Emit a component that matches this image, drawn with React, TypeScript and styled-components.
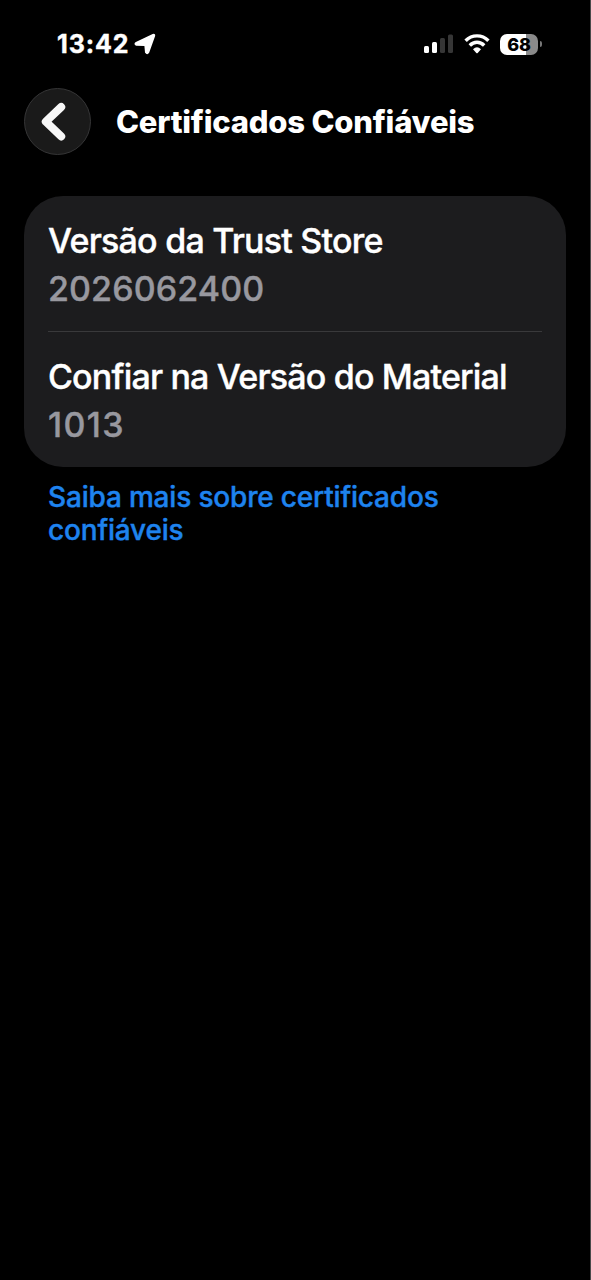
import React from "react";
import styled, { createGlobalStyle } from "styled-components";

const GlobalStyle = createGlobalStyle`
  * { box-sizing: border-box; }
  body {
    margin: 0;
    background: #000;
    font-family: Inter, "Liberation Sans", sans-serif;
    color: #fff;
  }
`;

const Screen = styled.main`
  width: 100%;
  height: 1280px;
  background: #000;
  border-right: 1px solid #4a4a4a;
  overflow: hidden;
`;

const StatusBar = styled.header`
  display: flex;
  align-items: center;
  justify-content: space-between;
  height: 88px;
  padding: 0 48px 0 57px;
`;

const StatusGroup = styled.div<{ $gap: number }>`
  display: flex;
  align-items: center;
  gap: ${({ $gap }) => $gap}px;
`;

const Time = styled.span`
  font-size: 25px;
  font-weight: 700;
  line-height: 30px;
  letter-spacing: 0.9px;
  -webkit-text-stroke: 0.4px currentColor;
`;

const Battery = styled.div`
  display: flex;
  align-items: center;
  gap: 2px;
`;

const BatteryBody = styled.div`
  width: 38px;
  height: 21px;
  border-radius: 7px;
  background: linear-gradient(90deg, #fff 68%, #8a8a8a 68%);
  color: #000;
  font-size: 18px;
  font-weight: 800;
  line-height: 21px;
  letter-spacing: -0.3px;
  text-align: center;
`;

const BatteryCap = styled.div`
  width: 2px;
  height: 6px;
  border-radius: 0 2px 2px 0;
  background: #777;
`;

const NavBar = styled.nav`
  display: flex;
  align-items: center;
  gap: 25px;
  height: 67px;
  padding-left: 24px;
`;

const BackButton = styled.button`
  display: flex;
  width: 67px;
  height: 67px;
  padding: 0;
  border: 1px solid #353536;
  border-radius: 50%;
  background: #1a1a1a;
`;

const Title = styled.h1`
  margin: 0;
  font-size: 31px;
  font-weight: 800;
  line-height: 38px;
  letter-spacing: -0.22px;
  white-space: nowrap;
`;

const Card = styled.section`
  margin: 41px 24px 0;
  padding: 0 24px;
  border-radius: 39px;
  background: #1c1c1e;
`;

const Row = styled.div<{ $divided?: boolean }>`
  height: ${({ $divided }) => ($divided ? 136 : 135)}px;
  padding-top: 21px;
  border-bottom: ${({ $divided }) => ($divided ? "1px solid #39393b" : "none")};
`;

const Label = styled.div<{ $spacing: number }>`
  height: 48px;
  font-size: 34px;
  font-weight: 500;
  line-height: 48px;
  letter-spacing: ${({ $spacing }) => $spacing}px;
  -webkit-text-stroke: 0.4px currentColor;
  white-space: nowrap;
`;

const Value = styled(Label)`
  color: #98989f;
`;

const LearnMore = styled.a`
  display: block;
  width: 430px;
  margin: 14px 0 0 48px;
  color: #1e83ee;
  font-size: 28px;
  font-weight: 500;
  line-height: 33px;
  letter-spacing: -0.18px;
  -webkit-text-stroke: 0.4px currentColor;
`;

const LocationIcon = () => (
  <svg width="22" height="22" viewBox="0 0 22 22">
    <path
      d="M2.2 9.6 19 1.7Q20.9 1.1 20.3 3L14.4 19.4Q13.2 21.4 11.8 19.4L11.2 13Q11.1 12.3 10.3 12.3L2.5 12Q.2 11 2.2 9.6Z"
      fill="#fff" stroke="#fff" strokeWidth="1.6" strokeLinejoin="round"
    />
  </svg>
);

const SignalIcon = () => (
  <svg width="30" height="20" viewBox="0 0 30 20">
    <rect x="0" y="12" width="5" height="7" rx="1.5" fill="#fff" />
    <rect x="8" y="8" width="5" height="11" rx="1.5" fill="#fff" />
    <rect x="16" y="4" width="5" height="15" rx="1.5" fill="#363636" />
    <rect x="24" y="0.5" width="5" height="18.5" rx="1.5" fill="#363636" />
  </svg>
);

const WifiIcon = () => (
  <svg width="26" height="20" viewBox="0 0 26 20">
    <g fill="none" stroke="#fff" strokeWidth="3.4">
      <path d="M1.6 6.8C8 .2 18 .2 24.4 6.8" />
      <path d="M5.8 11.5C10 7.2 16 7.2 20.2 11.5" />
    </g>
    <path d="M9 15.2Q13 11.4 17 15.2L13.7 18.9Q13 19.6 12.3 18.9Z" fill="#fff" />
  </svg>
);

const ChevronIcon = () => (
  <svg width="65" height="65" viewBox="0 0 65 65">
    <path d="M36.2 18 20.8 32.7 36.2 47.4" fill="none" stroke="#f7f7f7" strokeWidth="8" strokeLinecap="round" strokeLinejoin="round" />
  </svg>
);

export default function App() {
  return (
    <>
      <GlobalStyle />
      <Screen>
        <StatusBar>
          <StatusGroup $gap={5}>
            <Time>13:42</Time>
            <LocationIcon />
          </StatusGroup>
          <StatusGroup $gap={10}>
            <SignalIcon />
            <WifiIcon />
            <Battery>
              <BatteryBody>68</BatteryBody>
              <BatteryCap />
            </Battery>
          </StatusGroup>
        </StatusBar>
        <NavBar>
          <BackButton aria-label="Voltar">
            <ChevronIcon />
          </BackButton>
          <Title>Certificados Confiáveis</Title>
        </NavBar>
        <Card>
          <Row $divided>
            <Label $spacing={-0.78}>Versão da Trust Store</Label>
            <Value $spacing={0.1}>2026062400</Value>
          </Row>
          <Row>
            <Label $spacing={-0.82}>Confiar na Versão do Material</Label>
            <Value $spacing={1.4}>1013</Value>
          </Row>
        </Card>
        <LearnMore>Saiba mais sobre certificados confiáveis</LearnMore>
      </Screen>
    </>
  );
}
